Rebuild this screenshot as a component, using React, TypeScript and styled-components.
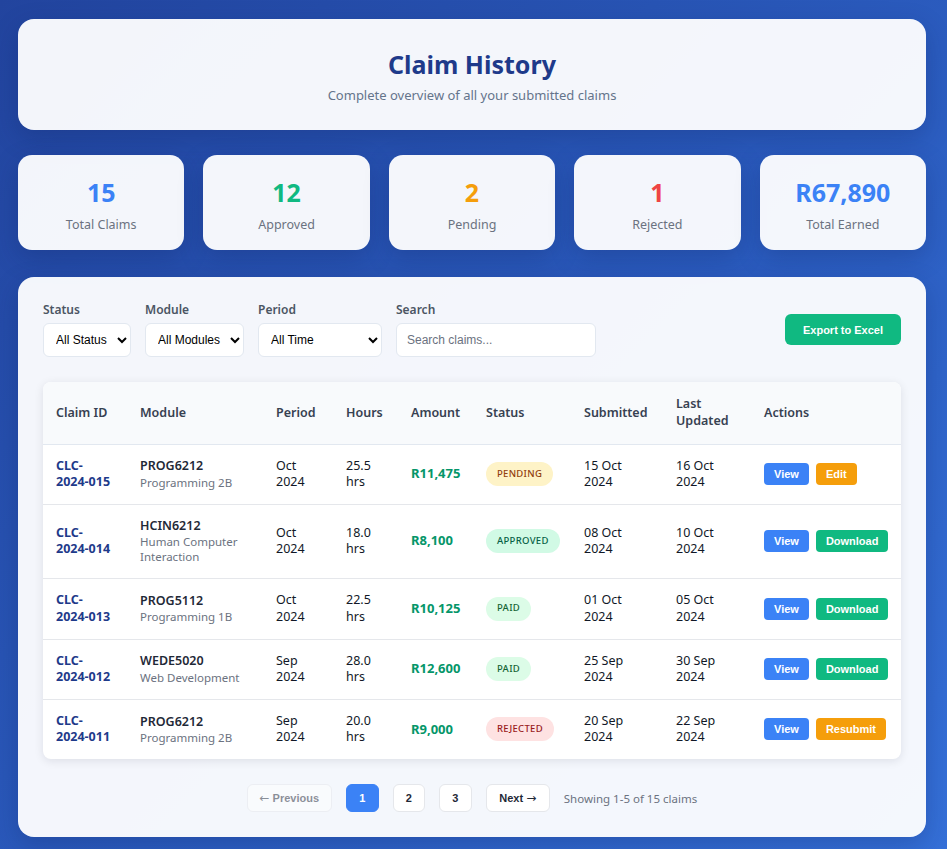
import React from "react";
import styled, { createGlobalStyle } from "styled-components";

const Global = createGlobalStyle`
  html, body { margin: 0; padding: 0; }
  body {
    font-family: "Segoe UI", "Noto Sans", "Open Sans", sans-serif;
    background: linear-gradient(135deg, #22449e 0%, #2b5cbf 55%, #3570d8 100%);
    min-height: 849px;
  }
  * { box-sizing: border-box; }
`;

const Page = styled.div`
  padding: 19px 21px 12px 18px;
  display: flex;
  flex-direction: column;
`;

const Card = styled.div`
  background: rgba(255, 255, 255, 0.95);
  border-radius: 16px;
  box-shadow: 0 8px 24px rgba(10, 30, 90, 0.25);
`;

const Header = styled(Card)`
  height: 111px;
  display: flex;
  flex-direction: column;
  align-items: center;
  padding-top: 28px;
`;

const Title = styled.h1`
  margin: 0;
  font-size: 25px;
  font-weight: 700;
  color: #1e3a8a;
  line-height: 34px;
`;

const Subtitle = styled.p`
  margin: 5px 0 0;
  font-size: 13px;
  color: #64748b;
  line-height: 18px;
`;

const Stats = styled.div`
  display: grid;
  grid-template-columns: repeat(5, 1fr);
  gap: 19px;
  margin: 25px 0 27px;
`;

const StatCard = styled(Card)`
  height: 95px;
  border-radius: 14px;
  display: flex;
  flex-direction: column;
  align-items: center;
  padding-top: 21px;
`;

const StatValue = styled.div<{ $color: string }>`
  font-size: 25px;
  font-weight: 700;
  color: ${(p) => p.$color};
  line-height: 32px;
`;

const StatLabel = styled.div`
  margin-top: 9px;
  font-size: 12.5px;
  color: #6b7280;
  line-height: 16px;
`;

const Main = styled(Card)`
  padding: 25px 25px 26px;
  height: 560px;
`;

const Filters = styled.div`
  display: flex;
  align-items: flex-end;
  gap: 14px;
`;

const Field = styled.div`
  display: flex;
  flex-direction: column;
  gap: 5px;
`;

const Label = styled.label`
  font-size: 12px;
  font-weight: 600;
  color: #4b5563;
  line-height: 16px;
`;

const Select = styled.select<{ $w: number }>`
  width: ${(p) => p.$w}px;
  height: 34px;
  border: 1px solid #e2e8f0;
  border-radius: 6px;
  background: #fff;
  font-family: "Liberation Sans", Arial, sans-serif;
  font-size: 12px;
  color: #000;
  padding: 0 6px 0 8px;
`;

const Search = styled.input`
  width: 200px;
  height: 34px;
  border: 1px solid #e2e8f0;
  border-radius: 6px;
  background: #fff;
  font-family: "Liberation Sans", Arial, sans-serif;
  font-size: 12px;
  padding: 0 10px;
  &::placeholder { color: #6b7280; }
`;

const Spacer = styled.div`
  flex: 1;
`;

const ExportBtn = styled.button`
  height: 31px;
  width: 116px;
  margin-bottom: 12px;
  border: none;
  border-radius: 6px;
  background: #10b981;
  color: #fff;
  font-family: "Liberation Sans", Arial, sans-serif;
  font-weight: 700;
  font-size: 11px;
`;

const TableWrap = styled.div`
  margin-top: 25px;
  background: #fff;
  border-radius: 8px;
  box-shadow: 0 2px 10px rgba(15, 23, 42, 0.1);
  overflow: hidden;
`;

const Table = styled.table`
  width: 858px;
  border-collapse: collapse;
  table-layout: fixed;
  font-size: 12.5px;
  line-height: 16.5px;
`;

const Th = styled.th`
  text-align: left;
  font-weight: 600;
  color: #374151;
  background: #f8fafc;
  padding: 0 13px;
  height: 62px;
  border-bottom: 1px solid #e2e8f0;
`;

const Tr = styled.tr<{ $h: number }>`
  height: ${(p) => p.$h}px;
  border-bottom: 1px solid #e5e7eb;
  &:last-child { border-bottom: none; }
`;

const Td = styled.td`
  padding: 0 13px;
  color: #111827;
  vertical-align: middle;
`;

const ClaimId = styled.span`
  font-weight: 700;
  color: #1e3a8a;
`;

const ModCode = styled.div`
  font-weight: 600;
  color: #1f2937;
`;

const ModName = styled.div`
  font-size: 11.5px;
  color: #6b7280;
  line-height: 15px;
`;

const Amount = styled.span`
  font-weight: 700;
  color: #059669;
  font-size: 13px;
  white-space: nowrap;
`;

const badgeColors: Record<string, [string, string]> = {
  pending: ["#fef3c7", "#92400e"],
  approved: ["#d1fae5", "#065f46"],
  paid: ["#dcfce7", "#166534"],
  rejected: ["#fee2e2", "#991b1b"],
};

const Badge = styled.span<{ $s: string }>`
  display: inline-flex;
  align-items: center;
  height: 24px;
  padding: 0 11px;
  border-radius: 12px;
  font-size: 9.5px;
  font-weight: 500;
  letter-spacing: 0.3px;
  text-transform: uppercase;
  background: ${(p) => badgeColors[p.$s][0]};
  color: ${(p) => badgeColors[p.$s][1]};
`;

const Actions = styled.div`
  display: flex;
  gap: 7px;
`;

const ActBtn = styled.button<{ $bg: string }>`
  height: 22px;
  padding: 0 10px;
  border: none;
  border-radius: 4px;
  background: ${(p) => p.$bg};
  color: #fff;
  font-family: "Liberation Sans", Arial, sans-serif;
  font-weight: 700;
  font-size: 11px;
`;

const Pager = styled.div`
  margin-top: 25px;
  display: flex;
  justify-content: center;
  align-items: center;
  gap: 14px;
`;

const PageBtn = styled.button<{ $active?: boolean; $disabled?: boolean; $w: number }>`
  width: ${(p) => p.$w}px;
  height: 28px;
  border-radius: 6px;
  border: 1px solid ${(p) => (p.$active ? "#3b82f6" : "#e5e7eb")};
  background: ${(p) => (p.$active ? "#3b82f6" : "#fff")};
  color: ${(p) => (p.$active ? "#fff" : "#1f2937")};
  opacity: ${(p) => (p.$disabled ? 0.5 : 1)};
  font-family: "Liberation Sans", Arial, sans-serif;
  font-weight: 700;
  font-size: 11px;
  padding: 0;
`;

const Arrow = styled.span`
  font-family: "DejaVu Sans", sans-serif;
  font-weight: 400;
  font-size: 12px;
`;

const PagerInfo = styled.span`
  font-size: 11.5px;
  color: #6b7280;
`;

const rows = [
  { id: "2024-015", code: "PROG6212", name: "Programming 2B", period: "Oct", hours: "25.5", amount: "R11,475", status: "pending", sub: "15 Oct", upd: "16 Oct", act: ["Edit", "#f59e0b"], h: 60 },
  { id: "2024-014", code: "HCIN6212", name: "Human Computer Interaction", period: "Oct", hours: "18.0", amount: "R8,100", status: "approved", sub: "08 Oct", upd: "10 Oct", act: ["Download", "#10b981"], h: 74 },
  { id: "2024-013", code: "PROG5112", name: "Programming 1B", period: "Oct", hours: "22.5", amount: "R10,125", status: "paid", sub: "01 Oct", upd: "05 Oct", act: ["Download", "#10b981"], h: 61 },
  { id: "2024-012", code: "WEDE5020", name: "Web Development", period: "Sep", hours: "28.0", amount: "R12,600", status: "paid", sub: "25 Sep", upd: "30 Sep", act: ["Download", "#10b981"], h: 60 },
  { id: "2024-011", code: "PROG6212", name: "Programming 2B", period: "Sep", hours: "20.0", amount: "R9,000", status: "rejected", sub: "20 Sep", upd: "22 Sep", act: ["Resubmit", "#f59e0b"], h: 60 },
];

const cols = [84, 136, 70, 65, 75, 98, 92, 88, 150];

export default function App() {
  return (
    <>
      <Global />
      <Page>
        <Header>
          <Title>Claim History</Title>
          <Subtitle>Complete overview of all your submitted claims</Subtitle>
        </Header>
        <Stats>
          <StatCard><StatValue $color="#3b82f6">15</StatValue><StatLabel>Total Claims</StatLabel></StatCard>
          <StatCard><StatValue $color="#10b981">12</StatValue><StatLabel>Approved</StatLabel></StatCard>
          <StatCard><StatValue $color="#f59e0b">2</StatValue><StatLabel>Pending</StatLabel></StatCard>
          <StatCard><StatValue $color="#ef4444">1</StatValue><StatLabel>Rejected</StatLabel></StatCard>
          <StatCard><StatValue $color="#3b82f6">R67,890</StatValue><StatLabel>Total Earned</StatLabel></StatCard>
        </Stats>
        <Main>
          <Filters>
            <Field>
              <Label>Status</Label>
              <Select $w={88}><option>All Status</option></Select>
            </Field>
            <Field>
              <Label>Module</Label>
              <Select $w={99}><option>All Modules</option></Select>
            </Field>
            <Field>
              <Label>Period</Label>
              <Select $w={124}><option>All Time</option></Select>
            </Field>
            <Field>
              <Label>Search</Label>
              <Search placeholder="Search claims..." />
            </Field>
            <Spacer />
            <ExportBtn>Export to Excel</ExportBtn>
          </Filters>
          <TableWrap>
            <Table>
              <colgroup>
                {cols.map((w, i) => <col key={i} style={{ width: w }} />)}
              </colgroup>
              <thead>
                <tr>
                  <Th>Claim ID</Th>
                  <Th>Module</Th>
                  <Th>Period</Th>
                  <Th>Hours</Th>
                  <Th>Amount</Th>
                  <Th>Status</Th>
                  <Th>Submitted</Th>
                  <Th>Last Updated</Th>
                  <Th>Actions</Th>
                </tr>
              </thead>
              <tbody>
                {rows.map((r) => (
                  <Tr key={r.id} $h={r.h}>
                    <Td><ClaimId>CLC-<br />{r.id}</ClaimId></Td>
                    <Td><ModCode>{r.code}</ModCode><ModName>{r.name}</ModName></Td>
                    <Td>{r.period}<br />2024</Td>
                    <Td>{r.hours}<br />hrs</Td>
                    <Td><Amount>{r.amount}</Amount></Td>
                    <Td><Badge $s={r.status}>{r.status}</Badge></Td>
                    <Td>{r.sub}<br />2024</Td>
                    <Td>{r.upd}<br />2024</Td>
                    <Td>
                      <Actions>
                        <ActBtn $bg="#3b82f6">View</ActBtn>
                        <ActBtn $bg={r.act[1]}>{r.act[0]}</ActBtn>
                      </Actions>
                    </Td>
                  </Tr>
                ))}
              </tbody>
            </Table>
          </TableWrap>
          <Pager>
            <PageBtn $w={85} $disabled><Arrow>←</Arrow> Previous</PageBtn>
            <PageBtn $w={33} $active>1</PageBtn>
            <PageBtn $w={32}>2</PageBtn>
            <PageBtn $w={33}>3</PageBtn>
            <PageBtn $w={64}>Next <Arrow>→</Arrow></PageBtn>
            <PagerInfo>Showing 1-5 of 15 claims</PagerInfo>
          </Pager>
        </Main>
      </Page>
    </>
  );
}
